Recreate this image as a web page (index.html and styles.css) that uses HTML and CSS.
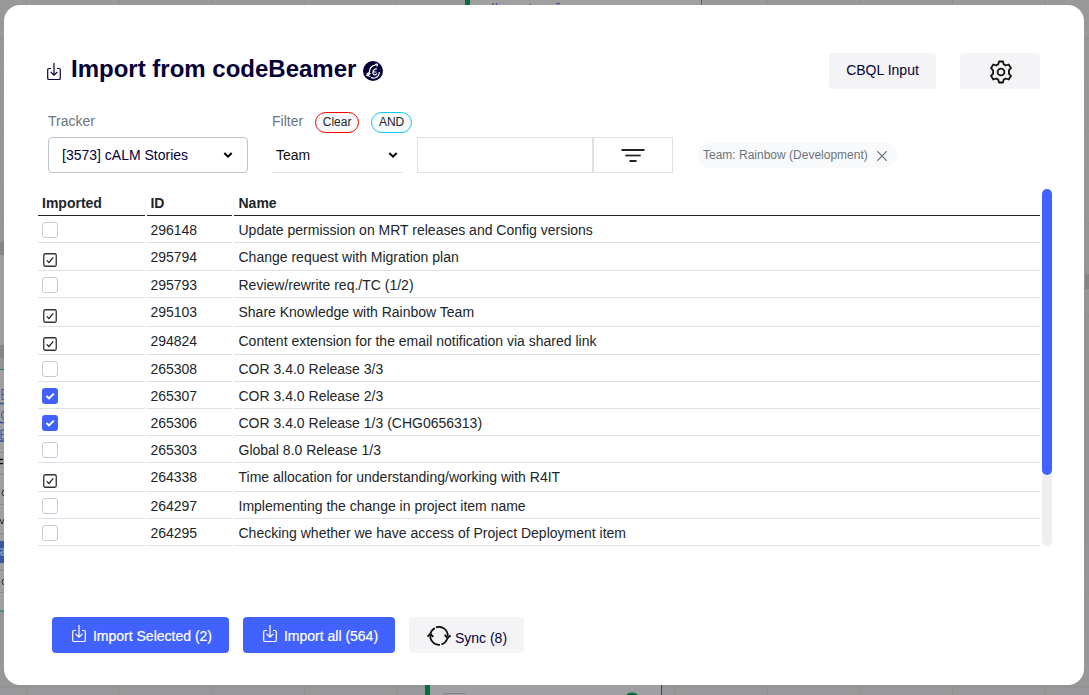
FILE: index.html
```
<!DOCTYPE html>
<html lang="en">
<head>
<meta charset="utf-8">
<title>Import from codeBeamer</title>
<link rel="stylesheet" href="styles.css">
</head>
<body>
<svg class="board" width="1089" height="695" viewBox="0 0 1089 695" aria-hidden="true">
  <defs>
    <pattern id="grid" x="26" y="38" width="92.6" height="92.6" patternUnits="userSpaceOnUse">
      <path d="M.5 0V93M0 .5H93" stroke="#8e8e8e" fill="none"/>
    </pattern>
    <linearGradient id="shade" x1="0" y1="0" x2="0" y2="1">
      <stop offset="0" stop-color="#999"/><stop offset=".65" stop-color="#939395"/><stop offset="1" stop-color="#98989a"/>
    </linearGradient>
  </defs>
  <rect width="1089" height="695" fill="url(#shade)"/>
  <rect width="1089" height="695" fill="url(#grid)"/>
  <rect x="465" width="236" height="6" fill="#a0a0a0"/>
  <rect x="465" width="5" height="6" fill="#00703f"/>
  <rect x="701" width="1" height="6" fill="#23805a"/>
  <path d="M493 3v2M496.500 3v2M530 4v1M556 4q1-1 4-.5" stroke="#3e5797" stroke-width="1.300" fill="none"/>
  <rect x="425" y="685" width="237" height="10" fill="#a0a0a2"/>
  <rect x="425" y="685" width="5" height="10" fill="#00703f"/>
  <rect x="661" y="685" width="1" height="10" fill="#00703f"/>
  <rect x="443.500" y="693.500" width="22" height="8" rx="1" fill="#a0a0a2" stroke="#858588"/>
  <circle cx="632" cy="701" r="8.500" fill="#00703f"/>
  <rect y="242" width="5" height="13" fill="#858585"/>
  <rect y="255" width="5" height="90" fill="#9f9f9f"/>
  <rect y="345" width="5" height="13" fill="#858585"/>
  <rect y="369" width="5" height="1" fill="#23805a"/>
  <rect y="370" width="5" height="240" fill="#a0a0a0"/>
  <path d="M0 452.500h5M0 474.500h5M0 504.500h5M0 533.500h5M0 570.500h5M0 592.500h5" stroke="#8b8b8b"/>
  <path d="M0 403.500h5M0 422.500h5M0 441h5" stroke="#2d52a6" stroke-width="1.300"/>
  <path d="M5 389.500H2v10h3M2 394.500h3M4.500 411Q1.500 411 1.500 415T4.500 420M5 430H1v9h4M1 434.500h4" stroke="#2d52a6" fill="none"/>
  <path d="M0 459.500h3M0 463.500h3" stroke="#111" stroke-width="1.500"/>
  <path d="M5 490Q2 490 2 493T5 496M5 579Q2 579 2 582T5 585M0 519l2 5 2-5" stroke="#333" fill="none"/>
  <rect y="541" width="5" height="22" fill="#3458a4"/>
  <path d="M0 549h4v6H1v-3h3" stroke="#aab2c2" fill="none"/>
  <rect y="610" width="5" height="2" fill="#4c8c70"/>
  <rect x="1085" y="274" width="4" height="15" fill="#858585"/>
</svg>

<svg class="symbols" aria-hidden="true">
  <symbol id="import" viewBox="0 0 16 18">
    <path d="M5 5.500H3Q1.700 5.500 1.700 6.800V15.200Q1.700 16.500 3 16.500H13Q14.300 16.500 14.300 15.200V6.800Q14.300 5.500 13 5.500H11M8 0V12M4.600 8.800L8 12.200L11.400 8.800" fill="none" stroke="currentColor" stroke-width="1.200"/>
  </symbol>
  <symbol id="chevron" viewBox="0 0 10 8">
    <path d="M1.300 2L5 5.600L8.700 2" fill="none" stroke="#000" stroke-width="1.900"/>
  </symbol>
  <symbol id="done" viewBox="0 0 14 14">
    <rect x=".75" y=".75" width="12.500" height="12.500" rx="1.500" fill="#fff" stroke="#333" stroke-width="1.300"/>
    <path d="M3.700 7.300L5.900 9.500L10.300 4.300" fill="none" stroke="#222" stroke-width="1.200"/>
  </symbol>
  <symbol id="tick" viewBox="0 0 16 16">
    <path d="M4.400 8L7 10.400L11.800 5.600" fill="none" stroke="#fff" stroke-width="2"/>
  </symbol>
</svg>

<main class="modal">
  <header class="header">
    <svg class="title-icon"><use href="#import"/></svg>
    <h1 class="title">Import from codeBeamer</h1>
    <svg class="logo" viewBox="0 0 20 20">
      <circle cx="10" cy="10" r="10" fill="#050038"/>
      <path d="M3.500 13.500Q5 12 6.500 11Q6.500 5.500 12 4.200Q13 2.500 14.500 3.300Q14.700 4.500 13.500 5.500" fill="none" stroke="#fff" stroke-width="1.200"/>
      <path d="M14 8Q11.500 7.300 10.300 9.800Q9 13 11.300 13.800Q13 14.200 14 12.500M10.500 11H13.500M8 16.500Q10 17.500 12.500 16.700Q16.300 15.300 16.300 11" fill="none" stroke="#fff" stroke-width="1.200"/>
      <path d="M2.800 14.800L6.800 11.500L8 12.800L6 14.300L8 16.300L5.500 15.500Z" fill="#fff"/>
    </svg>
    <button class="btn secondary cbql">CBQL Input</button>
    <button class="btn secondary settings" aria-label="Settings">
      <svg width="24" height="24" viewBox="0 0 24 24" fill="none" stroke="#111" stroke-width="1.800" stroke-linejoin="round">
        <path d="M10 1.500H14L14.700 4.400Q15.800 4.700 16.700 5.500L19.700 4.500L22 8.200L19.800 10.300Q20.200 12 19.800 13.700L22 15.800L19.700 19.500L16.700 18.500Q15.800 19.300 14.700 19.600L14 22.500H10L9.300 19.600Q8.200 19.300 7.300 18.500L4.300 19.500L2 15.800L4.200 13.700Q3.800 12 4.200 10.300L2 8.200L4.300 4.500L7.300 5.500Q8.200 4.700 9.300 4.400Z"/>
        <circle cx="12" cy="12" r="3.400"/>
      </svg>
    </button>
  </header>

  <section class="filters">
    <div class="field tracker">
      <div class="label">Tracker</div>
      <div class="select boxed"><span>[3573] cALM Stories</span><svg class="chevron"><use href="#chevron"/></svg></div>
    </div>
    <div class="field filter">
      <div class="label">Filter <span class="pill clear">Clear</span><span class="pill and">AND</span></div>
      <div class="filter-row">
        <div class="select underlined"><span>Team</span><svg class="chevron"><use href="#chevron"/></svg></div>
        <div class="search"></div>
        <div class="apply">
          <svg width="24" height="14" viewBox="0 0 24 14" stroke="#222">
            <path d="M.500 2H23.500" stroke-width="2"/><path d="M4.300 7.500H19.700" stroke-width="1.700"/><path d="M8.500 13H15.500" stroke-width="2"/>
          </svg>
        </div>
        <div class="chip"><span>Team: Rainbow (Development)</span>
          <svg width="10" height="10" viewBox="0 0 10 10"><path d="M.3.300L9.700 9.700M9.700.3L.3 9.700" stroke="#656b75" stroke-width="1.200"/></svg>
        </div>
      </div>
    </div>
  </section>

  <section class="list">
    <div class="table">
      <div class="row head"><div>Imported</div><div>ID</div><div>Name</div></div>
      <div class="row"><div><i class="box"></i></div><div>296148</div><div>Update permission on MRT releases and Config versions</div></div>
      <div class="row imported"><div><svg class="done"><use href="#done"/></svg></div><div>295794</div><div>Change request with Migration plan</div></div>
      <div class="row"><div><i class="box"></i></div><div>295793</div><div>Review/rewrite req./TC (1/2)</div></div>
      <div class="row imported tall"><div><svg class="done"><use href="#done"/></svg></div><div>295103</div><div>Share Knowledge with Rainbow Team</div></div>
      <div class="row imported"><div><svg class="done"><use href="#done"/></svg></div><div>294824</div><div>Content extension for the email notification via shared link</div></div>
      <div class="row"><div><i class="box"></i></div><div>265308</div><div>COR 3.4.0 Release 3/3</div></div>
      <div class="row"><div><svg class="box checked"><use href="#tick"/></svg></div><div>265307</div><div>COR 3.4.0 Release 2/3</div></div>
      <div class="row"><div><svg class="box checked"><use href="#tick"/></svg></div><div>265306</div><div>COR 3.4.0 Release 1/3 (CHG0656313)</div></div>
      <div class="row"><div><i class="box"></i></div><div>265303</div><div>Global 8.0 Release 1/3</div></div>
      <div class="row imported tall"><div><svg class="done"><use href="#done"/></svg></div><div>264338</div><div>Time allocation for understanding/working with R4IT</div></div>
      <div class="row"><div><i class="box"></i></div><div>264297</div><div>Implementing the change in project item name</div></div>
      <div class="row"><div><i class="box"></i></div><div>264295</div><div>Checking whether we have access of Project Deployment item</div></div>
    </div>
    <div class="scrollbar"><div class="thumb"></div></div>
  </section>

  <footer class="footer">
    <button class="btn primary selected"><svg class="import-icon"><use href="#import"/></svg><span>Import Selected (2)</span></button>
    <button class="btn primary all"><svg class="import-icon"><use href="#import"/></svg><span>Import all (564)</span></button>
    <button class="btn secondary sync">
      <svg width="24" height="20" viewBox="0 0 24 20" fill="none" stroke="#111" stroke-width="1.800">
        <path d="M3.200 9A8.900 8.900 0 0 1 7.800 2.100M9 1.400A8.900 8.900 0 0 1 20.800 10M20.300 12.500A8.900 8.900 0 0 1 14.500 18.400M13 18.800A8.900 8.900 0 0 1 3.400 12V8.500"/>
        <path d="M.5 10.500L3.300 7.800L6.300 10.800M17.700 9L20.700 12L23.700 9.300"/>
      </svg>
      <span>Sync (8)</span>
    </button>
  </footer>
</main>
</body>
</html>
```
FILE: styles.css
```
* { box-sizing: border-box; }
body {
  margin: 0;
  height: 695px;
  padding: 5px 5px 10px 4px;
  overflow: hidden;
  background: #999;
  font: 14px/20px "Liberation Sans", Arial, sans-serif;
  color: #212529;
}
svg { display: block; flex: none; }
.board { position: absolute; left: 0; top: 0; z-index: -1; }
.symbols { display: none; }
.modal {
  height: 680px;
  padding: 48px 32px 0 34px;
  background: #fff;
  border-radius: 16px;
}
.header { display: flex; align-items: flex-start; height: 58px; padding: 0 12px 0 8px; color: #050038; }
.title-icon { width: 16px; height: 18px; margin-top: 10px; }
.title { margin: 0 0 0 9px; font-size: 24px; line-height: 32px; font-weight: 700; white-space: nowrap; }
.logo { width: 20px; height: 20px; margin: 8px 0 0 7px; }
.btn {
  display: flex;
  align-items: center;
  justify-content: center;
  height: 36px;
  padding: 0;
  border: 0;
  border-radius: 4px;
  font: inherit;
  white-space: nowrap;
}
.secondary { background: #f4f4f7; color: #050038; }
.primary { background: #4262ff; color: #fff; }
.cbql { width: 107px; margin-left: auto; padding-bottom: 2px; }
.settings { width: 80px; margin-left: 24px; padding: 1px 0 0 1px; }

.filters { display: flex; gap: 24px; height: 78px; padding-left: 10px; }
.label { display: flex; align-items: flex-start; height: 26px; color: #6c757d; }
.tracker { width: 200px; }
.select { display: flex; align-items: center; justify-content: space-between; height: 36px; }
.chevron { width: 10px; height: 8px; }
.boxed { padding: 0 14px 0 13px; border: 1px solid #c3c2cf; border-radius: 4px; color: #050038; }
.underlined { width: 131px; padding: 0 5px 0 4px; border-bottom: 1px solid #e0e0e6; color: #111; }
.pill {
  height: 21px;
  margin-top: 1px;
  border: 1px solid;
  border-radius: 11px;
  background: #f8f9fa;
  color: #212529;
  font-size: 12px;
  line-height: 18px;
  text-align: center;
}
.clear { width: 44px; margin-left: 12px; border-color: red; }
.and { width: 41px; margin-left: 12px; border-color: #0dcaf0; }
.filter-row { display: flex; align-items: flex-start; }
.search { width: 176px; height: 36px; margin-left: 14px; border: 1px solid #e0e0e6; }
.apply { display: flex; align-items: center; justify-content: center; width: 80px; height: 36px; border: 1px solid #e0e0e6; }
.chip {
  display: flex;
  align-items: center;
  gap: 9px;
  height: 25px;
  margin: 6px 0 0 24px;
  padding: 0 10px 0 6px;
  border-radius: 13px;
  background: #f8f9fa;
  color: #6c757d;
  font-size: 12px;
  white-space: nowrap;
}
.chip span { margin-bottom: 2px; }
.chip svg { margin-top: 1px; }

.list { display: flex; gap: 2px; height: 357px; }
.table { width: 1002px; padding-top: 2px; }
.row { display: grid; grid-template-columns: 107px 85px 806px; column-gap: 2px; height: 27px; }
.row > div { padding: 4px 4px 0; border-bottom: 1px solid #dee0e5; }
.row > div:nth-child(2) { padding-left: 3.4px; }
.row > div:nth-child(3) { padding-left: 4.5px; }
.row.head { height: 25px; font-weight: 700; }
.row.head > div { padding-top: 2px; border-color: #212529; }
.row.imported { height: 28px; }
.row.imported.tall { height: 29px; }
.row > div:first-child:has(svg), .row > div:first-child:has(i) { display: flex; align-items: flex-end; }
.box { width: 16px; height: 16px; margin-bottom: 4px; border: 1px solid #c9c8d6; border-radius: 3px; background: #fff; }
.checked { border: 0; background: #4262ff; }
.done { width: 14px; height: 14px; margin: 0 0 3px 1px; }
.scrollbar { width: 10px; border-radius: 5px; background: #eee; }
.thumb { height: 286px; border-radius: 5px; background: #4262ff; }

.footer { display: flex; gap: 14px; margin: 71px 0 0 14px; }
.import-icon { width: 16px; height: 18px; margin: 0 6px 2px 0; }
.primary span { margin-top: 2px; -webkit-text-stroke: .2px #fff; }
.selected { width: 177px; padding-left: 2px; }
.all { width: 152px; padding-left: 2px; }
.sync { width: 115px; gap: 4px; padding-left: 1px; }
.sync span { margin-top: 6px; }
.sync svg { margin-top: 1px; }
```
